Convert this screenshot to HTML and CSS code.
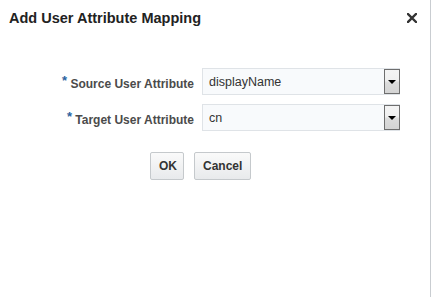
FILE: index.html
```html
<!DOCTYPE html>
<html lang="en">
<head>
  <meta charset="UTF-8" />
  <title>Add User Attribute Mapping</title>
  <link rel="stylesheet" href="styles.css">
</head>
<body>

  <div class="dialog">
    <!-- Title bar -->
    <div class="dialog-header">
      <h1 class="dialog-title">Add User Attribute Mapping</h1>
      <svg class="close-btn" width="10" height="10" viewBox="0 0 10 10">
        <path d="M1 1 L9 9 M9 1 L1 9" stroke="#333" stroke-width="2.4" stroke-linecap="square" fill="none"/>
      </svg>
    </div>

    <!-- Mapping form -->
    <div class="form-grid">
      <label class="field-label"><span class="required">*</span> Source User Attribute</label>
      <div class="select-box">
        <span class="select-value">displayName</span>
        <span class="select-btn"><span class="arrow"></span></span>
      </div>

      <label class="field-label"><span class="required">*</span> Target User Attribute</label>
      <div class="select-box">
        <span class="select-value">cn</span>
        <span class="select-btn"><span class="arrow"></span></span>
      </div>
    </div>

    <div class="button-row">
      <button class="btn btn-ok">OK</button>
      <button class="btn">Cancel</button>
    </div>
  </div>

</body>
</html>
```

FILE: styles.css
```css
/* Basic Reset */
* {
  margin: 0;
  padding: 0;
  box-sizing: border-box;
}

body {
  background: #fff;
  color: #333;
  font-family: "Liberation Sans", Arial, sans-serif;
  width: 431px;
  height: 297px;
  overflow: hidden;
}

/* Dialog */
.dialog {
  height: 297px;
  border-right: 1px solid #c9cdd1;
}

.dialog-header {
  display: flex;
  justify-content: space-between;
  align-items: center;
  padding: 5px 13px 0 9px;
  height: 30px;
}

.dialog-title {
  font-size: 14.5px;
  font-weight: bold;
  color: #222;
}

.close-btn {
  display: block;
}

/* Form */
.form-grid {
  display: grid;
  grid-template-columns: 194px 198px;
  column-gap: 8px;
  row-gap: 9px;
  margin-top: 38px;
  align-items: center;
}

.field-label {
  text-align: right;
  font-size: 12px;
  font-weight: bold;
  color: #4b4b4b;
}

.required {
  color: #2c63a0;
  font-size: 13px;
  vertical-align: 3px;
}

.select-box {
  display: flex;
  align-items: center;
  height: 27px;
  border: 1px solid #dfe3e7;
  background: #f8fafc;
}

.select-value {
  flex: 1;
  padding-left: 6px;
  font-size: 12.5px;
  color: #333;
}

.select-btn {
  display: flex;
  align-items: center;
  justify-content: center;
  width: 16px;
  height: 25px;
  margin-right: -1px;
  border: 1px solid #6e6e6e;
  background: linear-gradient(#f4f4f4 0%, #f0f0f0 45%, #dcdcdc 55%, #d4d4d4 100%);
}

.arrow {
  width: 0;
  height: 0;
  border-left: 4px solid transparent;
  border-right: 4px solid transparent;
  border-top: 4px solid #000;
}

/* Buttons */
.button-row {
  display: flex;
  gap: 10px;
  padding-left: 150px;
  margin-top: 21px;
}

.btn {
  height: 28px;
  padding: 0 8px;
  font-family: "Liberation Sans", Arial, sans-serif;
  font-size: 12px;
  font-weight: bold;
  color: #333;
  border: 1px solid #c5c9cc;
  border-radius: 2px;
  background: linear-gradient(#fafafa, #e8eaec);
}

.btn-ok {
  width: 34px;
}
```
